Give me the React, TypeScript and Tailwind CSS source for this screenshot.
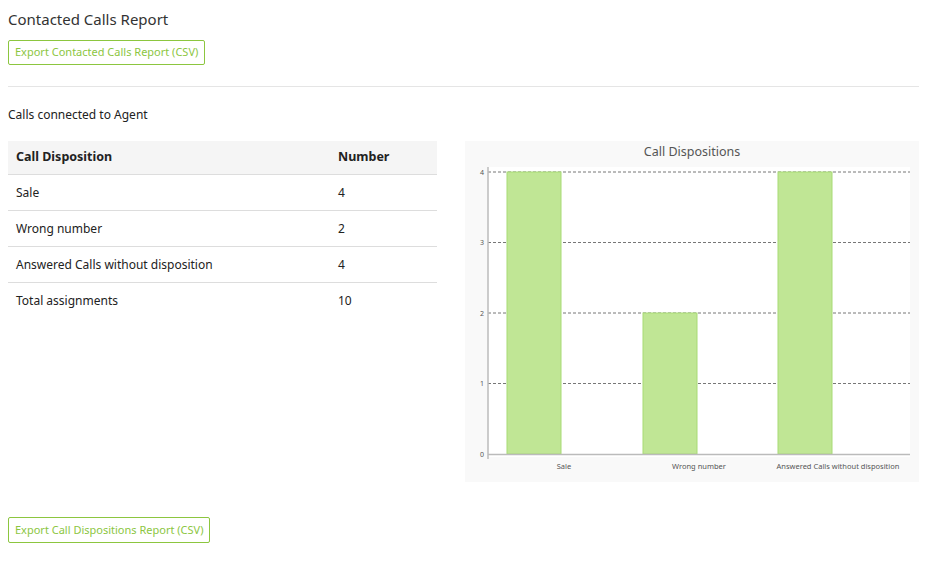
import React from "react";

const rows = [
  ["Sale", "4"],
  ["Wrong number", "2"],
  ["Answered Calls without disposition", "4"],
  ["Total assignments", "10"],
];

function Chart() {
  const y = (v: number) => 287 - v * 70.5; // local coords: plot bottom at 287
  const bars = [
    { x: 42, v: 4, label: "Sale", lx: 99 },
    { x: 178, v: 2, label: "Wrong number", lx: 234 },
    { x: 313, v: 4, label: "Answered Calls without disposition", lx: 373 },
  ];
  return (
    <svg width="454" height="316" className="block">
      <rect x="23" y="0" width="422" height="290" fill="#ffffff" />
      {[1, 2, 3, 4].map((v) => (
        <line key={v} x1="23" x2="445" y1={y(v)} y2={y(v)} stroke="#777" strokeDasharray="3,2" strokeWidth="1" />
      ))}
      {bars.map((b) => (
        <rect key={b.label} x={b.x} y={y(b.v)} width="54" height={287 - y(b.v)} fill="#c0e695" stroke="#a8db74" strokeWidth="1" />
      ))}
      <line x1="23" x2="23" y1="0" y2="292" stroke="#bbb" strokeWidth="1.5" />
      <line x1="23" x2="445" y1="287.5" y2="287.5" stroke="#bbb" strokeWidth="1.5" />
      {[0, 1, 2, 3, 4].map((v) => (
        <text key={v} x="19" y={y(v) + 2.5} fontSize="7" fill="#555" textAnchor="end">{v}</text>
      ))}
      {bars.map((b) => (
        <text key={b.label} x={b.lx} y="302" fontSize="7.5" fill="#555" textAnchor="middle">{b.label}</text>
      ))}
    </svg>
  );
}

export default function App() {
  return (
    <div className="w-[927px] h-[565px] bg-white text-[#333] px-2 pt-[9px]" style={{ fontFamily: '"Noto Sans", "Open Sans", sans-serif' }}>
      <h1 className="text-[15px] leading-[20px] text-[#333]">Contacted Calls Report</h1>
      <button className="mt-[11px] h-[25px] px-[6px] border border-[#8cc63f] rounded-[2px] text-[#8cc63f] text-[11px]">Export Contacted Calls Report (CSV)</button>
      <div className="mt-[21px] border-t border-[#e5e5e5]" />
      <div className="mt-[20px] text-[12px] leading-[16px] text-[#222]">Calls connected to Agent</div>
      <div className="mt-[18px] flex gap-[28px]">
        <div className="w-[437px]">
          <div className="flex h-[34px] items-center bg-[#f5f5f5] border-b border-[#ddd] text-[12.5px] font-bold text-[#222]">
            <div className="flex-1 pl-2">Call Disposition</div>
            <div className="w-[99px]">Number</div>
          </div>
          {rows.map((r, i) => (
            <div key={i} className={`flex h-[36px] items-center text-[12px] text-[#222] ${i < rows.length - 1 ? "border-b border-[#ddd]" : ""}`}>
              <div className="flex-1 pl-2">{r[0]}</div>
              <div className="w-[99px]">{r[1]}</div>
            </div>
          ))}
        </div>
        <div className="w-[454px] h-[341px] bg-[#f9f9f9] flex flex-col">
          <div className="text-center text-[12.5px] text-[#555] pt-[2px] h-[26px]">Call Dispositions</div>
          <Chart />
        </div>
      </div>
      <button className="mt-[35px] h-[26px] px-[6px] border border-[#8cc63f] rounded-[2px] text-[#8cc63f] text-[11px]">Export Call Dispositions Report (CSV)</button>
    </div>
  );
}
